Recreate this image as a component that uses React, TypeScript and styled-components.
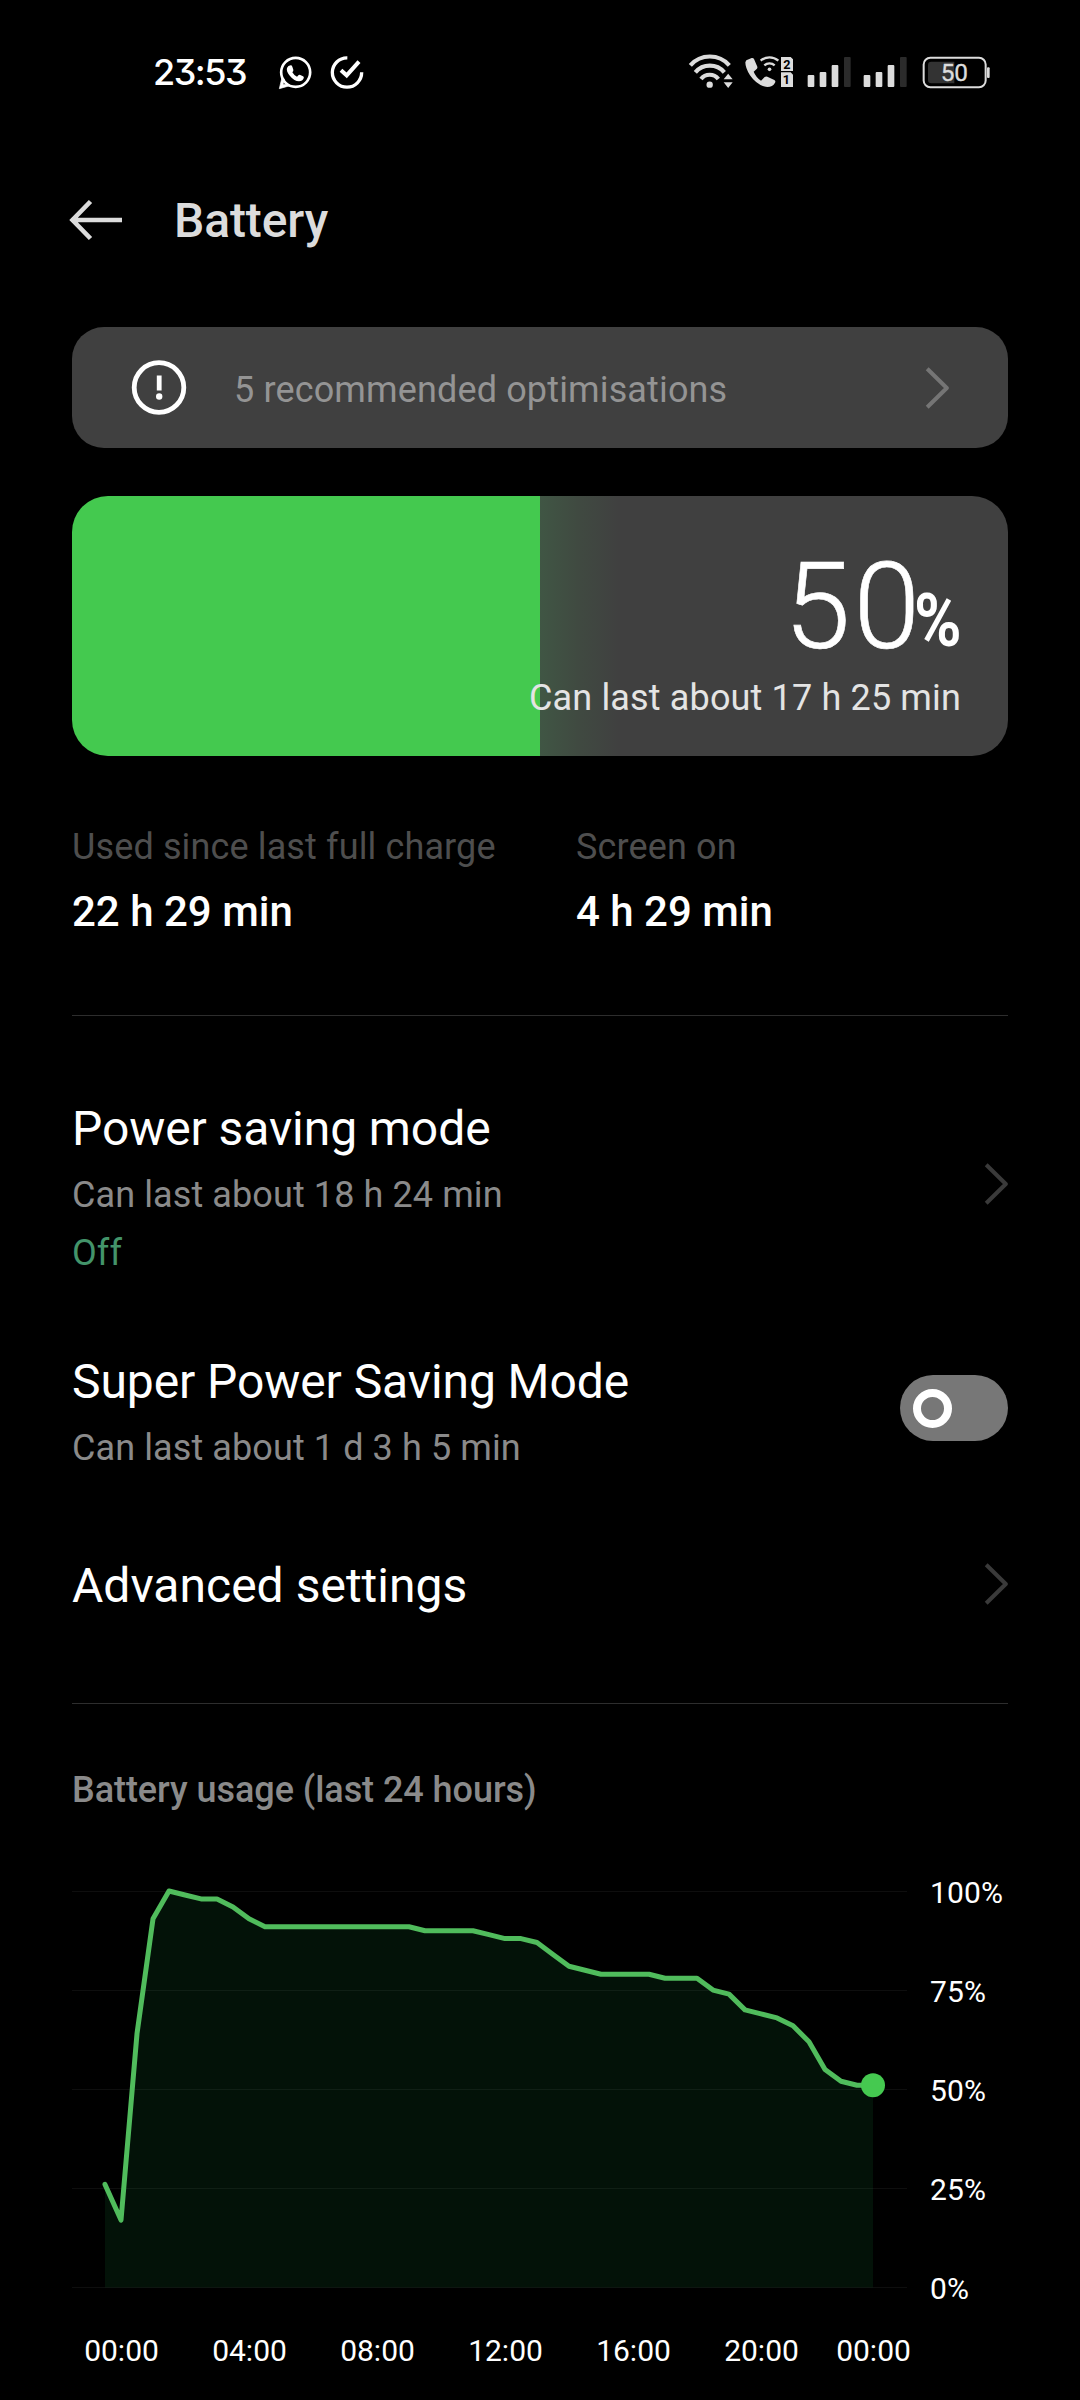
import React from 'react';
import styled, { createGlobalStyle } from 'styled-components';

const GlobalStyle = createGlobalStyle`
  body {
    margin: 0;
    background: #000;
  }
`;

const Screen = styled.div`
  box-sizing: border-box;
  width: 1080px;
  height: 2400px;
  overflow: hidden;
  background: #000;
  color: #fff;
  font-family: Roboto, 'Liberation Sans', sans-serif;
`;

/* ---------- status bar ---------- */

const StatusBar = styled.header`
  display: flex;
  align-items: center;
  justify-content: space-between;
  height: 144px;
  padding: 0 88px 0 153px;
  box-sizing: border-box;
`;

const StatusGroup = styled.div<{ $gap: number }>`
  display: flex;
  align-items: center;
  gap: ${(p) => p.$gap}px;
`;

const Clock = styled.span`
  width: 107px;
  font: 500 36px/40px Inter, Roboto, sans-serif;
  font-feature-settings: 'cv09';
  letter-spacing: -1.5px;
  white-space: nowrap;
`;

const StatusGlyph = styled.svg`
  display: block;
  height: 40px;
  flex: none;
`;

const SignalPair = styled.div`
  display: flex;
  gap: 10px;
  margin: 0 8px 0 4px;
`;

/* ---------- page header ---------- */

const TitleBar = styled.div`
  display: flex;
  align-items: center;
  gap: 50px;
  height: 64px;
  margin-top: 44px;
  padding-left: 68px;
`;

const Title = styled.h1`
  margin: 0;
  padding-top: 2px;
  font-size: 48px;
  font-weight: 500;
  line-height: 64px;
  letter-spacing: -0.1px;
  color: #dcdcdc;
`;

const Content = styled.main`
  display: flex;
  flex-direction: column;
  padding: 75px 72px 0;
`;

/* ---------- cards ---------- */

const Banner = styled.div`
  display: flex;
  align-items: center;
  height: 121px;
  box-sizing: border-box;
  padding: 0 59px 0 57px;
  border-radius: 32px;
  background: #404040;
`;

const BannerText = styled.span`
  flex: 1;
  margin-left: 45px;
  padding-top: 4px;
  font-size: 36px;
  line-height: 48px;
  letter-spacing: 0.14px;
  color: #949494;
`;

const ChargeCard = styled.section`
  display: flex;
  flex-direction: column;
  align-items: flex-end;
  justify-content: flex-end;
  height: 260px;
  margin-top: 48px;
  box-sizing: border-box;
  padding: 0 47px 34px 0;
  border-radius: 36px;
  background: linear-gradient(
    to right,
    #44c94f 0 50%,
    #405644 50%,
    #404a41 54%,
    #404040 58.5%
  );
`;

const ChargeLevel = styled.div`
  display: flex;
  align-items: baseline;
  height: 100px;
  margin-bottom: 17px;
`;

const ChargeNumber = styled.span`
  font-size: 120px;
  font-weight: 300;
  line-height: 100px;
  letter-spacing: 3px;
  -webkit-text-stroke: 0.6px #fff;
`;

const PercentSign = styled.span`
  width: 46px;
  margin-left: -8px;
  font-size: 74px;
  font-weight: 700;
  line-height: 76px;
  transform: translate(-1px, -2px) scaleX(0.87);
  transform-origin: left;
`;

const ChargeEstimate = styled.span`
  font-size: 36px;
  line-height: 48px;
  letter-spacing: 0.15px;
  color: #e4e4e4;
`;

/* ---------- stats ---------- */

const Stats = styled.dl`
  display: grid;
  grid-template-columns: 504px 1fr;
  margin: 67px 0 75px;
`;

const StatLabel = styled.dt`
  font-size: 36px;
  line-height: 48px;
  letter-spacing: 0.13px;
  color: #4e4e4e;
`;

const StatValue = styled.dd`
  margin: 13px 0 0;
  font-size: 42px;
  font-weight: 500;
  line-height: 56px;
`;

const Divider = styled.hr`
  width: 100%;
  height: 1px;
  margin: 0;
  border: 0;
  background: #2d2d2d;
`;

/* ---------- settings rows ---------- */

const SettingsList = styled.div`
  display: flex;
  flex-direction: column;
  padding: 81px 0 85px;
`;

const SettingRow = styled.div<{ $top?: number }>`
  display: flex;
  align-items: center;
  justify-content: space-between;
  margin-top: ${(p) => p.$top ?? 0}px;
`;

const RowTitle = styled.div<{ $tracking?: number }>`
  font-size: 48px;
  line-height: 64px;
  letter-spacing: ${(p) => p.$tracking ?? -0.08}px;
`;

const RowNote = styled.div`
  margin-top: 10px;
  font-size: 36px;
  line-height: 48px;
  letter-spacing: 0.1px;
  color: #8a8a8a;
`;

const RowState = styled(RowNote)`
  color: #43946a;
`;

const RowEnd = styled.div<{ $lift: number }>`
  padding-bottom: ${(p) => p.$lift}px;
`;

const Toggle = styled.div`
  display: flex;
  align-items: center;
  width: 108px;
  height: 66px;
  box-sizing: border-box;
  padding-left: 13px;
  border-radius: 33px;
  background: #777;
`;

const Knob = styled.div`
  width: 39px;
  height: 39px;
  box-sizing: border-box;
  border: 8px solid #fff;
  border-radius: 50%;
`;

/* ---------- chart ---------- */

const ChartTitle = styled.h2`
  margin: 62px 0 61px;
  font-size: 36px;
  font-weight: 500;
  line-height: 48px;
  letter-spacing: -0.06px;
  color: #8a8a8a;
`;

const ChartRow = styled.div`
  display: flex;
  gap: 18px;
  height: 432px;
`;

const ValueAxis = styled.div`
  display: flex;
  flex-direction: column;
  justify-content: space-between;
  font-size: 30px;
  line-height: 36px;
  letter-spacing: 0.1px;
`;

const TimeAxis = styled.div`
  display: grid;
  grid-template-columns: repeat(6, 128px) 96px;
  margin: 26px 0 0 -14.5px;
  font-size: 30px;
  line-height: 36px;
  text-align: center;
`;

const ChevronSvg = styled.svg`
  display: block;
  width: 24px;
  height: 42px;
`;

const Chevron = ({ color }: { color: string }) => (
  <ChevronSvg viewBox="0 0 24 42">
    <path d="M2.200 1.800 21.800 21 2.200 40.200" fill="none" stroke={color} strokeWidth="4" strokeLinejoin="round" />
  </ChevronSvg>
);

const LIGHT = '#dcdcdc';

const ChatIcon = () => (
  <StatusGlyph width="34" viewBox="444 36 102 120">
    <circle cx="497" cy="97" r="43.5" fill="none" stroke="#fff" strokeWidth="8" />
    <path d="M456 112 L448 146 L480 137 L474 131 L459 134 L463 117z" fill="#fff" stroke="#fff" strokeWidth="2" />
    <path
      d="M471 84q3-8 11-8q4 0 5 4l3 9q1 3-3 8q4 8 14 13l5-5q2-2 5 0l8 4q4 2 2 6q-3 9-14 9q-14 0-27-16q-12-14-9-24z"
      fill="#fff"
    />
  </StatusGlyph>
);

const CheckIcon = () => (
  <StatusGlyph width="34" viewBox="600 36 102 120" fill="none" stroke="#fff">
    <path d="M652 53.5A44 44 0 1 0 695 97" strokeWidth="10" />
    <path d="M633 91 650 106 687 65" strokeWidth="12" />
  </StatusGlyph>
);

const WifiIcon = () => (
  <StatusGlyph width="50" viewBox="48 36 150 120">
    <g fill="none" stroke={LIGHT} strokeWidth="12.5">
      <path d="M61 76A78 78 0 0 1 178 76" />
      <path d="M76 97A57 57 0 0 1 163 97" />
      <path d="M93 117A33 33 0 0 1 145 117" />
    </g>
    <circle cx="119" cy="134" r="9.5" fill={LIGHT} />
    <path d="M153 124 175 92 197 124 175 154z" fill="#000" />
    <path d="M161 118H188L174.500 101zM161 127H188L174.500 144z" fill={LIGHT} />
  </StatusGlyph>
);

const WifiCallIcon = () => (
  <StatusGlyph width="54" viewBox="216 36 162 120">
    <path
      d="M229 61 245 54q5-1 7 3L262 80q1 4-2 7L251 95Q258 112 273 122L284 111q4-3 8-1L313 120q5 3 2 8Q308 141 292 141Q262 138 240 106Q226 84 226 67z"
      fill={LIGHT}
    />
    <g fill="none" stroke={LIGHT} strokeWidth="7">
      <path d="M272 62A40 40 0 0 1 325 62" />
      <path d="M283 76A23 23 0 0 1 314 76" />
    </g>
    <circle cx="298.500" cy="88" r="5.500" fill={LIGHT} />
    <path d="M333 51H362L369 58V93H333zM333 97H362L369 104V141H333z" fill={LIGHT} />
    <g fontFamily="Roboto, sans-serif" fontWeight="700" fontSize="38" textAnchor="middle" fill="#000">
      <text x="351" y="86">2</text>
      <text x="349" y="133">1</text>
    </g>
  </StatusGlyph>
);

const SIGNAL_BARS = [
  { x: 8, y: 105, fill: LIGHT },
  { x: 44, y: 96, fill: LIGHT },
  { x: 80, y: 75, fill: LIGHT },
  { x: 117, y: 51, fill: '#2b2b2b' },
];

const SignalIcon = () => (
  <StatusGlyph width="46" viewBox="3 36 138 120">
    {SIGNAL_BARS.map((bar) => (
      <rect key={bar.x} x={bar.x} y={bar.y} width="20" height={141 - bar.y} rx="3" fill={bar.fill} />
    ))}
  </StatusGlyph>
);

const BatteryIcon = () => (
  <StatusGlyph width="70" viewBox="756 36 210 120">
    <rect x="761" y="53.500" width="186" height="88" rx="20" fill="none" stroke={LIGHT} strokeWidth="6" />
    <path d="M853 65H784q-10 0-10 10V120q0 10 10 10H853z" fill="#333" />
    <rect x="951" y="82" width="8" height="32" rx="3" fill={LIGHT} />
    <text
      x="853"
      y="124"
      fontFamily="Roboto, sans-serif"
      fontSize="73"
      fontWeight="400"
      stroke={LIGHT}
      strokeWidth="1"
      textAnchor="middle"
      fill={LIGHT}
    >
      50
    </text>
  </StatusGlyph>
);

const BackArrow = () => (
  <svg width="56" height="48" viewBox="0 0 56 48" fill="none" stroke={LIGHT} strokeWidth="4.6">
    <path d="M54 24H5M22.500 5.500 4.500 24 22.500 42.500" />
  </svg>
);

const AlertIcon = () => (
  <svg width="60" height="60" viewBox="0 0 60 60">
    <circle cx="30" cy="29.500" r="24.800" fill="none" stroke="#fff" strokeWidth="4.800" />
    <path d="M27.800 17.500h4.800v15h-4.800z" fill="#fff" />
    <circle cx="30.200" cy="38.500" r="3.200" fill="#fff" />
  </svg>
);

/* Battery level in percent, one sample every half hour. */
const LEVELS = [
  26, 17, 64, 93, 100, 99, 98, 98, 96, 93, 91, 91, 91, 91, 91, 91, 91, 91, 91, 91, 90, 90, 90, 90, 89, 88, 88, 87, 84,
  81, 80, 79, 79, 79, 79, 78, 78, 78, 75, 74, 70, 69, 68, 66, 62, 55, 52, 51, 51,
];

const PLOT = { left: 33, step: 16, top: 16, height: 396.5 };
const levelX = (i: number) => PLOT.left + i * PLOT.step;
const levelY = (v: number) => PLOT.top + ((100 - v) / 100) * PLOT.height;
const linePath = LEVELS.map((v, i) => `${i ? 'L' : 'M'}${levelX(i)} ${levelY(v).toFixed(1)}`).join('');
const lastIndex = LEVELS.length - 1;
const areaPath = `${linePath}V${levelY(0)}H${levelX(0)}z`;

const TICKS = [100, 75, 50, 25, 0];
const HOURS = ['00:00', '04:00', '08:00', '12:00', '16:00', '20:00', '00:00'];

const UsagePlot = () => (
  <svg width="840" height="432" viewBox="0 0 840 432">
    <path d={areaPath} fill="#031208" />
    {TICKS.map((t) => (
      <rect key={t} x="0" y={Math.round(levelY(t) - 0.5)} width="835" height="1" fill="#fff" fillOpacity="0.055" />
    ))}
    <path d={linePath} fill="none" stroke="#50bc5c" strokeWidth="5" strokeLinecap="round" strokeLinejoin="round" />
    <circle cx={levelX(lastIndex)} cy={levelY(LEVELS[lastIndex])} r="12" fill="#45c950" />
  </svg>
);

export default function App() {
  return (
    <Screen>
      <GlobalStyle />
      <StatusBar>
        <StatusGroup $gap={18}>
          <Clock>23:53</Clock>
          <ChatIcon />
          <CheckIcon />
        </StatusGroup>
        <StatusGroup $gap={6}>
          <WifiIcon />
          <WifiCallIcon />
          <SignalPair>
            <SignalIcon />
            <SignalIcon />
          </SignalPair>
          <BatteryIcon />
        </StatusGroup>
      </StatusBar>

      <TitleBar>
        <BackArrow />
        <Title>Battery</Title>
      </TitleBar>

      <Content>
        <Banner>
          <AlertIcon />
          <BannerText>5 recommended optimisations</BannerText>
          <Chevron color="#757575" />
        </Banner>

        <ChargeCard>
          <ChargeLevel>
            <ChargeNumber>50</ChargeNumber>
            <PercentSign>%</PercentSign>
          </ChargeLevel>
          <ChargeEstimate>Can last about 17 h 25 min</ChargeEstimate>
        </ChargeCard>

        <Stats>
          <div>
            <StatLabel>Used since last full charge</StatLabel>
            <StatValue>22 h 29 min</StatValue>
          </div>
          <div>
            <StatLabel>Screen on</StatLabel>
            <StatValue>4 h 29 min</StatValue>
          </div>
        </Stats>

        <Divider />

        <SettingsList>
          <SettingRow>
            <div>
              <RowTitle>Power saving mode</RowTitle>
              <RowNote>Can last about 18 h 24 min</RowNote>
              <RowState>Off</RowState>
            </div>
            <RowEnd $lift={6}>
              <Chevron color="#3a3a3a" />
            </RowEnd>
          </SettingRow>
          <SettingRow $top={73}>
            <div>
              <RowTitle>Super Power Saving Mode</RowTitle>
              <RowNote>Can last about 1 d 3 h 5 min</RowNote>
            </div>
            <RowEnd $lift={6}>
              <Toggle>
                <Knob />
              </Toggle>
            </RowEnd>
          </SettingRow>
          <SettingRow $top={82}>
            <RowTitle $tracking={0.02}>Advanced settings</RowTitle>
            <RowEnd $lift={4}>
              <Chevron color="#3a3a3a" />
            </RowEnd>
          </SettingRow>
        </SettingsList>

        <Divider />

        <ChartTitle>Battery usage (last 24 hours)</ChartTitle>
        <ChartRow>
          <UsagePlot />
          <ValueAxis>
            {TICKS.map((t) => (
              <span key={t}>{t}%</span>
            ))}
          </ValueAxis>
        </ChartRow>
        <TimeAxis>
          {HOURS.map((h, i) => (
            <span key={i}>{h}</span>
          ))}
        </TimeAxis>
      </Content>
    </Screen>
  );
}
